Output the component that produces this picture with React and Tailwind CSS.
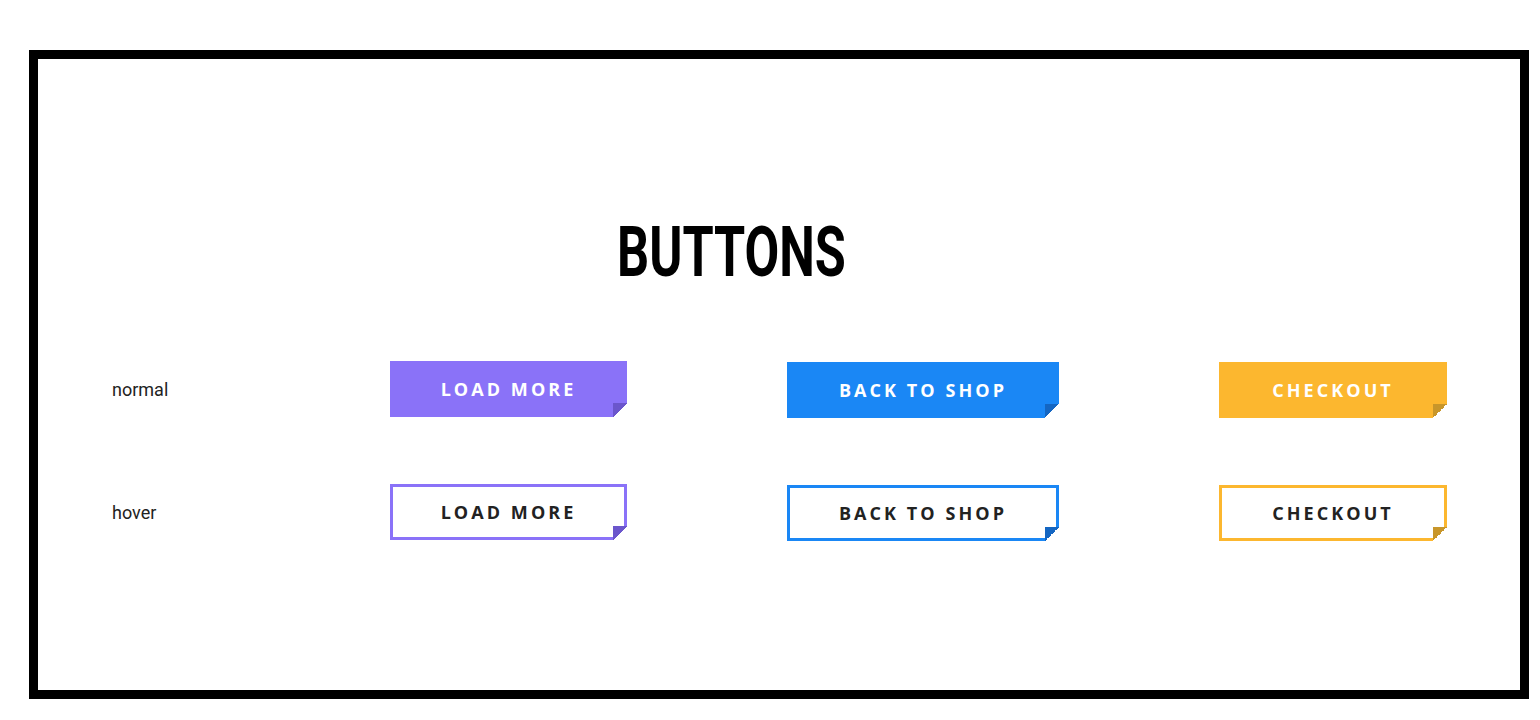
import React from "react";

function Fold({ color, offset }) {
  return (
    <span
      className={`absolute h-[14px] w-[14px] ${offset}`}
      style={{ background: `linear-gradient(135deg, ${color} 50%, #ffffff 50%)` }}
    />
  );
}

function Btn({ label, width, bg, fold, border, hover, extra = "" }) {
  if (hover) {
    return (
      <div
        className={`relative flex h-[56px] items-center justify-center border-[3px] bg-white ${border} ${width} ${extra}`}
      >
        <span className="text-[18px] font-bold tracking-[0.17em] text-[#222222]" style={{ fontFamily: '"Open Sans", sans-serif' }}>
          {label}
        </span>
        <Fold color={fold} offset="-bottom-[3px] -right-[3px]" />
      </div>
    );
  }
  return (
    <div className={`relative flex h-[56px] items-center justify-center ${bg} ${width} ${extra}`}>
      <span className="text-[18px] font-bold tracking-[0.17em] text-white" style={{ fontFamily: '"Open Sans", sans-serif' }}>
        {label}
      </span>
      <Fold color={fold} offset="bottom-0 right-0" />
    </div>
  );
}

export default function App() {
  const labelCls = "self-center text-[18px] text-[#222222] leading-none";
  return (
    <div className="min-h-[720px] w-[1540px] bg-white pl-[29px] pt-[50px]" style={{ fontFamily: "Roboto, sans-serif" }}>
      <div className="box-border h-[649px] w-[1500px] border-[9px] border-black bg-white pt-[158px]">
        <div className="pl-[579px]">
          <h1 className="h-[70px] origin-left scale-x-[0.72] text-[70px] font-bold leading-none text-black" style={{ fontFamily: "Roboto, sans-serif" }}>
            BUTTONS
          </h1>
        </div>
        <div className="mt-[74px] grid grid-cols-[278px_397px_432px_auto] items-start gap-y-[66px] pl-[74px]">
          <div className={labelCls}>normal</div>
          <Btn label="LOAD MORE" width="w-[237px]" bg="bg-[#8a72f8]" fold="#6b56cc" />
          <Btn label="BACK TO SHOP" width="w-[272px]" bg="bg-[#1a87f5]" fold="#1466c2" extra="mt-px" />
          <Btn label="CHECKOUT" width="w-[228px]" bg="bg-[#fcb72f]" fold="#c8962a" extra="mt-px" />

          <div className={labelCls}>hover</div>
          <Btn hover label="LOAD MORE" width="w-[237px]" border="border-[#8a72f8]" fold="#6b56cc" />
          <Btn hover label="BACK TO SHOP" width="w-[272px]" border="border-[#1a87f5]" fold="#1466c2" extra="mt-px" />
          <Btn hover label="CHECKOUT" width="w-[228px]" border="border-[#fcb72f]" fold="#c8962a" extra="mt-px" />
        </div>
      </div>
    </div>
  );
}
